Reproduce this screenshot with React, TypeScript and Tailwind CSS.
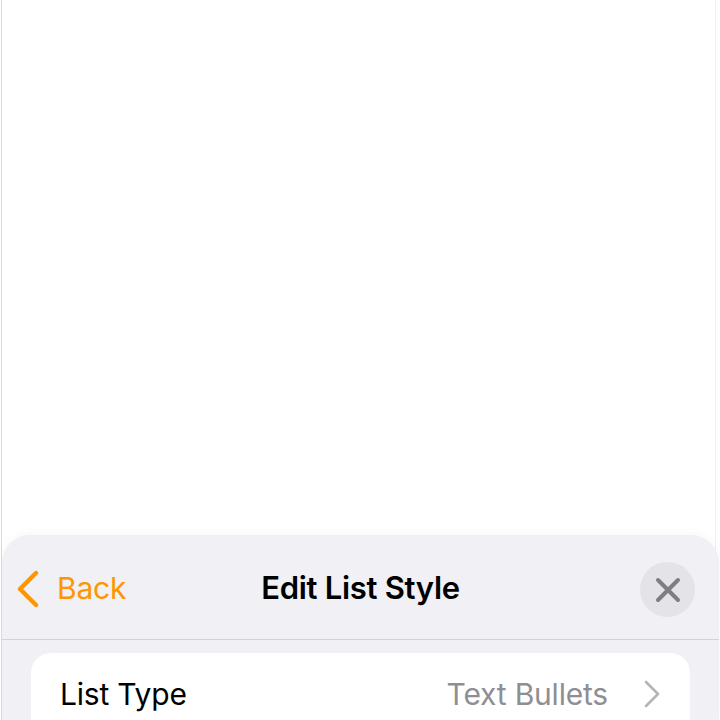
export default function App() {
  return (
    <div className="h-[720px] w-[720px] overflow-hidden bg-white flex flex-col justify-end font-['Inter',sans-serif]">
      <div className="h-full ml-px mr-[4px] border-l border-r border-l-[#dcdcdc] border-r-[#f0f0f0] flex flex-col justify-end">
        {/* Bottom sheet */}
        <div className="-mr-[4px] h-[185px] flex flex-col rounded-t-[28px] bg-[#f0f0f5] shadow-[0_-2px_8px_rgba(0,0,0,0.03)]">
          <div className="h-[99px] shrink-0 flex items-center justify-between pl-[14px] pr-[24px] pt-[5px] border-b border-[#d2d2d7] box-content">
            <div className="flex items-center w-[210px] pb-[2px] text-[#ff9500]">
              <svg width="24" height="38" viewBox="0 0 24 38" fill="none" stroke="currentColor" strokeWidth="4.4" strokeLinecap="round" strokeLinejoin="round">
                <path d="M20 3 L4 19 L20 35" />
              </svg>
              <span className="ml-[17px] text-[30px] tracking-[-0.2px]">Back</span>
            </div>
            <h1 className="pb-[2px] text-[31px] font-semibold text-black tracking-[-0.3px]">Edit List Style</h1>
            <div className="w-[200px] flex justify-end">
              <button className="size-[55px] rounded-full bg-[#e3e3e8] flex items-center justify-center">
                <svg width="26" height="26" viewBox="0 0 26 26" fill="none" stroke="#7d7d82" strokeWidth="4" strokeLinecap="round">
                  <path d="M3 3 L23 23 M23 3 L3 23" />
                </svg>
              </button>
            </div>
          </div>
          <div className="pl-[29px] pr-[29px] pt-[13px]">
            <div className="bg-white rounded-t-[20px] h-[80px] pl-[29px] pr-[29px] pt-[2px] flex items-center justify-between">
              <span className="text-[30px] text-black tracking-[-0.2px]">List Type</span>
              <div className="flex items-center">
                <span className="text-[30px] text-[#8e8e93] tracking-[-0.2px]">Text Bullets</span>
                <svg width="18" height="28" viewBox="0 0 18 28" fill="none" stroke="#b4b4b9" strokeWidth="2.6" strokeLinecap="round" strokeLinejoin="round" className="ml-[35px]">
                  <path d="M3 2 L15 14 L3 26" />
                </svg>
              </div>
            </div>
          </div>
        </div>
      </div>
    </div>
  )
}
